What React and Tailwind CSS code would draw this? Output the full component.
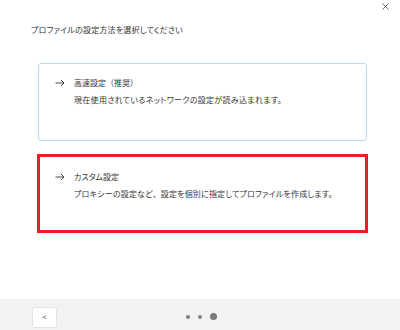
import React from "react";

const Arrow = () => (
  <svg width="10" height="8" viewBox="0 0 10 8" className="shrink-0">
    <path d="M0.5 4H9M6 1L9 4L6 7" fill="none" stroke="#333" strokeWidth="0.9" />
  </svg>
);

export default function App() {
  return (
    <div
      className="relative w-[400px] h-[330px] bg-white flex flex-col text-[#333] [font-feature-settings:'palt']"
      style={{ fontFamily: '"Noto Sans CJK JP", "Noto Sans", sans-serif' }}
    >
      <div className="absolute top-[3px] right-[11px]">
        <svg width="7" height="7" viewBox="0 0 7 7">
          <path d="M0.5 0.5L6.5 6.5M6.5 0.5L0.5 6.5" stroke="#555" strokeWidth="0.9" />
        </svg>
      </div>
      <div className="pt-[24px] pl-[31px] text-[8px] leading-[12px] tracking-[0.2px]">
        プロファイルの設定方法を選択してください
      </div>
      <div className="mt-[27px] ml-[38px] w-[329px] h-[78px] border-[1.5px] border-[#b4dcec] rounded-[3px] pt-[13px] pl-[16px] text-[8px] leading-[12px]">
        <div className="flex items-center gap-[9px]">
          <Arrow />
          <span className="[font-feature-settings:normal]">高速設定（推奨）</span>
        </div>
        <div className="pl-[19px] mt-[5px] tracking-[0.3px]">
          現在使用されているネットワークの設定が読み込まれます。
        </div>
      </div>
      <div className="mt-[13px] ml-[37px] w-[331px] h-[79px] border-[3px] border-[#ee1c25] pt-[14px] pl-[15px] text-[8px] leading-[12px]">
        <div className="flex items-center gap-[9px]">
          <Arrow />
          <span>カスタム設定</span>
        </div>
        <div className="pl-[19px] mt-[5px] tracking-[0.18px]">
          プロキシーの設定など<span className="[font-feature-settings:normal] tracking-normal">、</span>設定を個別に指定してプロファイルを作成します。
        </div>
      </div>
      <div className="mt-auto h-[31px] bg-[#f2f2f2] flex items-center relative">
        <div className="ml-[32px] mt-[5px] w-[25px] h-[21px] bg-white border border-[#e3e3e3] rounded-[3px] flex items-center justify-center text-[8px] text-[#444]">
          &lt;
        </div>
        <div className="absolute left-[186px] top-[14px] flex items-center gap-[8px]">
          <div className="w-[4px] h-[4px] rounded-full bg-[#808080]" />
          <div className="w-[4px] h-[4px] rounded-full bg-[#808080]" />
          <div className="w-[7px] h-[7px] rounded-full bg-[#7a7a7a]" />
        </div>
      </div>
    </div>
  );
}
